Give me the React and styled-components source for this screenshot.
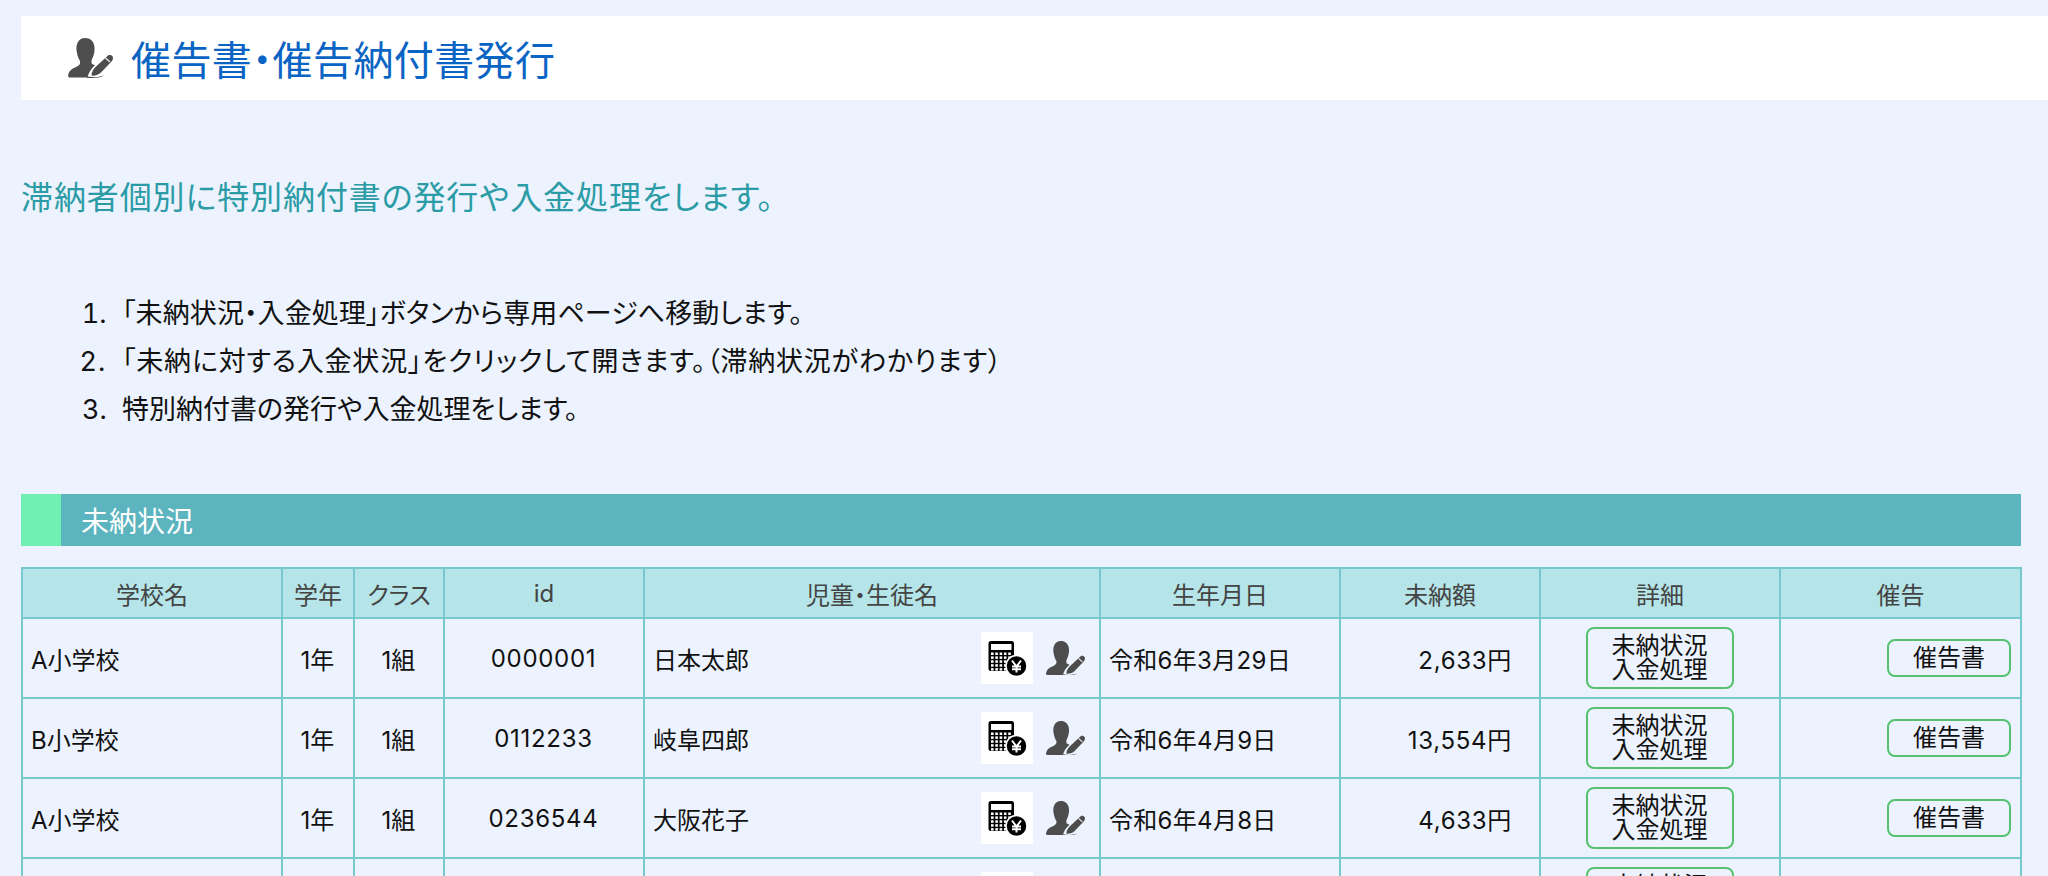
import React from 'react';
import styled, { createGlobalStyle } from 'styled-components';

const GlobalStyle = createGlobalStyle`
  html, body {
    margin: 0;
    padding: 0;
    height: 100%;
    overflow: hidden;
    background: #ecf3fe;
  }
  body {
    font-family: "Noto Sans CJK JP", "Noto Sans", sans-serif;
    font-feature-settings: "palt";
    color: #111;
  }
`;

const columns = [260, 72, 90, 200, 456, 240, 200, 240, 241];

const students = [
  { school: 'A小学校', grade: '1年', group: '1組', id: '0000001', name: '日本太郎', birth: '令和6年3月29日', amount: '2,633円' },
  { school: 'B小学校', grade: '1年', group: '1組', id: '0112233', name: '岐阜四郎', birth: '令和6年4月9日', amount: '13,554円' },
  { school: 'A小学校', grade: '1年', group: '1組', id: '0236544', name: '大阪花子', birth: '令和6年4月8日', amount: '4,633円' },
  {}
];

function UserPenIcon({ width = 45 }) {
  return (
    <svg width={width} height={(width * 40) / 45} viewBox="0 0 45 40">
      <path
        fill="#4d4d4d"
        d="M17 0C22 0 26 3 26.500 9C26.800 13 26 17 24.500 20C23.500 22.500 23 24 24 26L27 27.300C23.500 30.500 20.500 34.500 19.500 39.500L2 39.500C0 39.500-.3 37.500.5 35.500C1.500 32.500 4 30.500 8 29C11.500 27.500 12.500 26 12 23C10 20 9 16 8.500 12C8 6 10.500 0 17 0Z"
      />
      <path
        fill="#4d4d4d"
        d="M40 17.500C41.500 16.500 44 17 44.800 19C45.200 20.500 44.800 22 44 23L33 34.500C31 36.500 28 37.500 25 37.800C24 37.900 23.500 37.300 23.500 36.500C24 33.500 25.500 31 27.500 29Z"
      />
      <path fill="none" stroke="#ecf3fe" strokeWidth="1.200" d="M37.500 20L42 24" />
      <path fill="#4d4d4d" d="M19 38.500L27 39.200C30 39 33 38.500 36 37.300C33.500 39 30 40 26 40L19 40Z" />
    </svg>
  );
}

function CalcYenIcon() {
  const keys = [];
  for (let row = 0; row < 5; row++) {
    for (let col = 0; col < 5; col++) {
      keys.push(<rect key={`${row}-${col}`} x={10 + col * 4.300} y={20.500 + row * 3.900} width="2.600" height="2.500" fill="#fff" />);
    }
  }
  return (
    <svg width="52" height="52" viewBox="0 0 52 52">
      <rect x="7.500" y="9" width="25.500" height="30" rx="2.500" fill="#000" />
      <rect x="10" y="12" width="20.500" height="6" fill="#fff" />
      {keys}
      <circle cx="35.500" cy="34" r="10.500" fill="#000" stroke="#fff" strokeWidth="1.500" />
      <path fill="none" stroke="#fff" strokeWidth="2" d="M31 28.500L35.500 34.500L40 28.500M35.500 34.500V40.500M31 34.500H40M31 37.300H40" />
    </svg>
  );
}

export default function App() {
  return (
    <>
      <GlobalStyle />
      <Page>
        <TitleBar>
          <TitleIcon><UserPenIcon width={45} /></TitleIcon>
          <Title>催告書・催告納付書発行</Title>
        </TitleBar>
        <Lead>滞納者個別に特別納付書の発行や入金処理をします。</Lead>
        <Steps>
          <Step $spacing="0.1px">「未納状況・入金処理」ボタンから専用ページへ移動します。</Step>
          <Step $spacing="0.8px">「未納に対する入金状況」をクリックして開きます。（滞納状況がわかります）</Step>
          <Step>特別納付書の発行や入金処理をします。</Step>
        </Steps>
        <SectionBar>未納状況</SectionBar>
        <Table>
          <colgroup>
            {columns.map((width, i) => <col key={i} style={{ width }} />)}
          </colgroup>
          <thead>
            <tr>
              <Th>学校名</Th>
              <Th>学年</Th>
              <Th>クラス</Th>
              <Th>id</Th>
              <Th>児童・生徒名</Th>
              <Th>生年月日</Th>
              <Th>未納額</Th>
              <Th>詳細</Th>
              <Th>催告</Th>
            </tr>
          </thead>
          <tbody>
            {students.map((s, i) => (
              <tr key={i}>
                <Td>{s.school}</Td>
                <Td $align="center">{s.grade}</Td>
                <Td $align="center">{s.group}</Td>
                <Td $align="center" $spacing="0.7px">{s.id}</Td>
                <Td>
                  <NameCell>
                    <span>{s.name}</span>
                    <IconGroup>
                      <CalcBox><CalcYenIcon /></CalcBox>
                      <UserPenIcon width={39} />
                    </IconGroup>
                  </NameCell>
                </Td>
                <Td $spacing="0.3px">{s.birth}</Td>
                <AmountTd $spacing="0.7px">{s.amount}</AmountTd>
                <Td $align="center">
                  <DetailButton>未納状況<br />入金処理</DetailButton>
                </Td>
                <Td $align="right">
                  {s.name && <NoticeButton>催告書</NoticeButton>}
                </Td>
              </tr>
            ))}
          </tbody>
        </Table>
      </Page>
    </>
  );
}

const Page = styled.div`
  padding: 16px 27px 0 21px;
  height: 860px;
  overflow: hidden;
`;

const TitleBar = styled.div`
  display: flex;
  align-items: center;
  gap: 17px;
  height: 84px;
  margin-right: -27px;
  padding-left: 47px;
  background: #fff;
`;

const TitleIcon = styled.div`
  display: flex;
  width: 46px;
`;

const Title = styled.h1`
  margin: 0;
  font-size: 40px;
  font-weight: 400;
  letter-spacing: 0.4px;
  color: #0a64c4;
`;

const Lead = styled.p`
  margin: 72px 0 0;
  font-size: 32px;
  line-height: 46px;
  letter-spacing: 0.9px;
  color: #2b9ba6;
`;

const Steps = styled.ol`
  margin: 72px 0 0;
  padding-left: 93px;
  font-family: Inter, "Noto Sans CJK JP", sans-serif;
  font-size: 27px;
  line-height: 48px;
  color: #111;
`;

const Step = styled.li`
  padding-left: 8px;
  letter-spacing: ${(p) => p.$spacing || 'normal'};
`;

const SectionBar = styled.div`
  display: flex;
  align-items: center;
  height: 52px;
  margin-top: 60px;
  padding-left: 20px;
  border-left: 40px solid #70efb2;
  background: #5bb4be;
  font-size: 28px;
  color: #fff;
`;

const Table = styled.table`
  width: 1999px;
  margin-top: 21px;
  border-collapse: collapse;
  table-layout: fixed;
  font-family: Inter, "Noto Sans CJK JP", sans-serif;
`;

const Th = styled.th`
  height: 48px;
  padding: 0;
  border: 2px solid #78c9cd;
  background: #b5e5e8;
  font-size: 24px;
  font-weight: 400;
  color: #444;
  text-align: center;
`;

const Td = styled.td`
  height: 78px;
  padding: 0 9px 0 8px;
  border: 2px solid #78c9cd;
  font-size: 24px;
  color: #111;
  letter-spacing: ${(p) => p.$spacing || 'normal'};
  text-align: ${(p) => p.$align || 'left'};
`;

const AmountTd = styled(Td)`
  padding-right: 27px;
  text-align: right;
`;

const NameCell = styled.div`
  display: flex;
  align-items: center;
  justify-content: space-between;
  height: 52px;
`;

const IconGroup = styled.div`
  display: flex;
  align-items: center;
  gap: 13px;
  margin-right: 5px;
`;

const CalcBox = styled.div`
  display: flex;
  width: 52px;
  height: 52px;
  background: #fff;
`;

const DetailButton = styled.button`
  display: inline-block;
  width: 148px;
  height: 62px;
  padding: 0;
  border: 2px solid #56c26f;
  border-radius: 8px;
  background: transparent;
  font: inherit;
  line-height: 24px;
  color: #111;
  vertical-align: middle;
`;

const NoticeButton = styled.button`
  display: inline-block;
  width: 124px;
  height: 38px;
  padding: 0;
  border: 2px solid #56c26f;
  border-radius: 8px;
  background: transparent;
  font: inherit;
  line-height: 30px;
  color: #111;
  vertical-align: middle;
`;
